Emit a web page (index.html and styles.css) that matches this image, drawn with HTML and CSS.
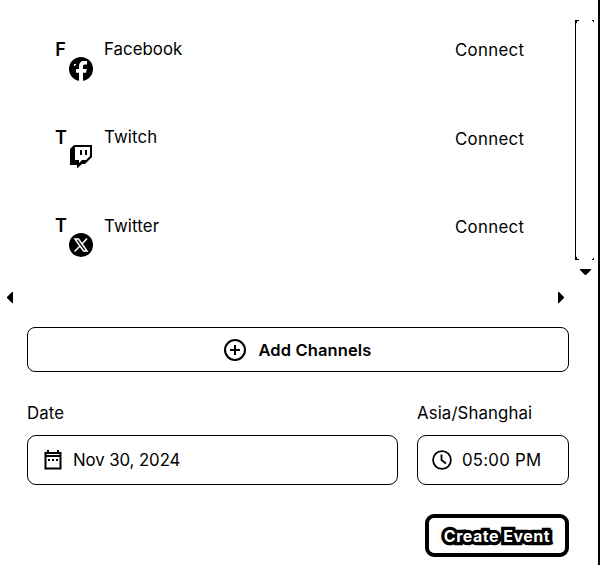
FILE: index.html
```html
<!DOCTYPE html>
<html lang="en">
<head>
<meta charset="utf-8">
<title>Create Event</title>
<link rel="stylesheet" href="styles.css">
</head>
<body>
<main class="panel">
  <section class="scroll-area">
    <ul class="channels">
      <li class="channel">
        <div class="avatar"><b class="initial">F</b>
          <svg class="badge" viewBox="0 0 24 24"><circle cx="12" cy="12" r="12"/><path fill="#fff" d="M10 24v-8.200H7V12h3V9.500C10 6 11.800 4 15 4h3v3.500h-2c-1.500 0-2 .8-2 2V12h3.700l-.6 3.800H14V24zM5 7h2v1H6v1H5z"/></svg>
        </div>
        <span class="name facebook">Facebook</span><span class="connect">Connect</span>
      </li>
      <li class="channel">
        <div class="avatar"><b class="initial">T</b>
          <svg class="badge" viewBox="0 0 24 24"><path fill-rule="evenodd" d="M5 0h18v12l-7 7h-3l-5 4.500V20H1V4zM6 2v13h4v3l3-3h4l4-4V2zM11 5h2v5h-2zM16 5h2v5h-2z"/></svg>
        </div>
        <span class="name twitch">Twitch</span><span class="connect lower">Connect</span>
      </li>
      <li class="channel">
        <div class="avatar"><b class="initial">T</b>
          <svg class="badge" viewBox="0 0 24 24"><circle cx="12" cy="12" r="12"/><path fill="none" stroke="#fff" stroke-width="1.500" d="M6 6h3.500l8.500 12h-3.500zM18 5.500l-5 5.500M11 13l-5.500 5.500"/></svg>
        </div>
        <span class="name twitter">Twitter</span><span class="connect lower">Connect</span>
      </li>
    </ul>
    <div class="scrollbar">
      <svg class="thumb" viewBox="0 0 20 240"><path d="M0 0h4v1H2v2H1v234h1v2h2v1H0zM17 0h2v2h-1V1h-1zM18 238h1v2h-2v-1h1z"/></svg>
      <svg class="down" viewBox="0 0 11 6"><path d="M0 0h11v1L6 6H5L0 1z"/></svg>
    </div>
    <div class="hscroll">
      <svg class="side" viewBox="0 0 6 11"><path d="M6 0H5L0 5v1l5 5h1z"/></svg>
      <svg class="side" viewBox="0 0 6 11"><path d="M0 0h1l5 5v1l-5 5H0z"/></svg>
    </div>
  </section>
  <button class="add">
    <svg class="plus" viewBox="0 0 22 22"><circle cx="11" cy="11" r="10"/><path d="M11 6v10M6 11h10"/></svg>
    <span class="add-label">Add Channels</span>
  </button>
  <section class="schedule">
    <div class="field">
      <label class="label date">Date</label>
      <div class="input">
        <svg class="calendar" viewBox="0 0 18 20"><path class="frame" d="M1.500 3h15v15.500h-15zM1 6h16M4 0v3M14 0v3"/><path d="M4 9h2v2H4zM8 9h2v2H8zM12 9h2v2h-2z"/></svg>
        <span class="value day">Nov 30, 2024</span>
      </div>
    </div>
    <div class="field">
      <label class="label zone">Asia/Shanghai</label>
      <div class="input">
        <svg class="clock" viewBox="0 0 20 20"><circle cx="10" cy="10" r="8.900"/><path d="M9.500 4.500V10l4.500 3.500"/></svg>
        <span class="value time">05:00 PM</span>
      </div>
    </div>
  </section>
  <footer class="actions"><button class="create"><span class="create-label">Create Event</span></button></footer>
</main>
</body>
</html>
```

FILE: styles.css
```css
* { box-sizing: border-box; }
body { margin: 0; background: #fff; color: #000; font: 16.800px/24px Inter, "Liberation Sans", sans-serif; }
svg { display: block; flex: none; }
button { font: inherit; color: inherit; background: #fff; padding: 0; }
.panel { width: 600px; height: 565px; border-right: 2px solid #000; overflow: hidden; }
.scroll-area { display: grid; grid-template-columns: 575px 23px; grid-template-rows: 292px 35px; }
.channels { list-style: none; margin: 0; padding: 37px 0 0 55px; }
.channel { display: flex; height: 88px; white-space: nowrap; }
.avatar { width: 49px; }
.initial { display: block; width: 11px; height: 20px; font-size: 18px; font-weight: 600; text-align: center; line-height: 25px; }
.badge { width: 24px; height: 24px; margin-left: 14px; }
.name { width: 351px; }
.facebook { letter-spacing: .06px; }
.twitch { letter-spacing: .15px; }
.twitter { padding-top: 1px; letter-spacing: .15px; }
.connect { padding-top: 1px; letter-spacing: .32px; }
.lower { padding-top: 2px; }
.scrollbar { padding-top: 20px; }
.thumb { width: 20px; height: 240px; }
.down { width: 11px; height: 6px; margin: 9px 0 0 5px; }
.hscroll { display: flex; justify-content: space-between; padding: 0 11px 0 7px; }
.side { width: 6px; height: 11px; }
.add { display: flex; align-items: center; justify-content: center; gap: 12px; width: 542px; height: 45px; margin-left: 27px; border: 1px solid #000; border-radius: 8px; }
.plus { width: 22px; height: 22px; fill: none; stroke: #000; stroke-width: 2; }
.add-label { font-size: 16.500px; font-weight: 600; letter-spacing: .12px; white-space: nowrap; }
.schedule { display: grid; grid-template-columns: 371px 152px; gap: 19px; margin: 29px 0 0 27px; }
.label { display: block; height: 34px; letter-spacing: .12px; }
.input { display: flex; align-items: center; height: 50px; padding-left: 15px; border: 1px solid #000; border-radius: 9px; white-space: nowrap; }
.calendar { width: 18px; height: 20px; margin: 0 11px 0 1px; }
.frame { fill: none; stroke: #000; stroke-width: 2; }
.clock { width: 20px; height: 20px; margin: 0 10px 0 -1px; fill: none; stroke: #000; stroke-width: 1.800; }
.day { letter-spacing: -.08px; }
.time { letter-spacing: .25px; }
.actions { display: flex; justify-content: flex-end; padding: 29px 29px 0 0; }
.create { width: 144px; height: 43px; border: 4px solid #000; border-radius: 9px; }
.create-label { color: #fff; font-size: 16px; font-weight: 700; letter-spacing: .5px; -webkit-text-stroke: 6.500px #000; paint-order: stroke fill; white-space: nowrap; }
```
